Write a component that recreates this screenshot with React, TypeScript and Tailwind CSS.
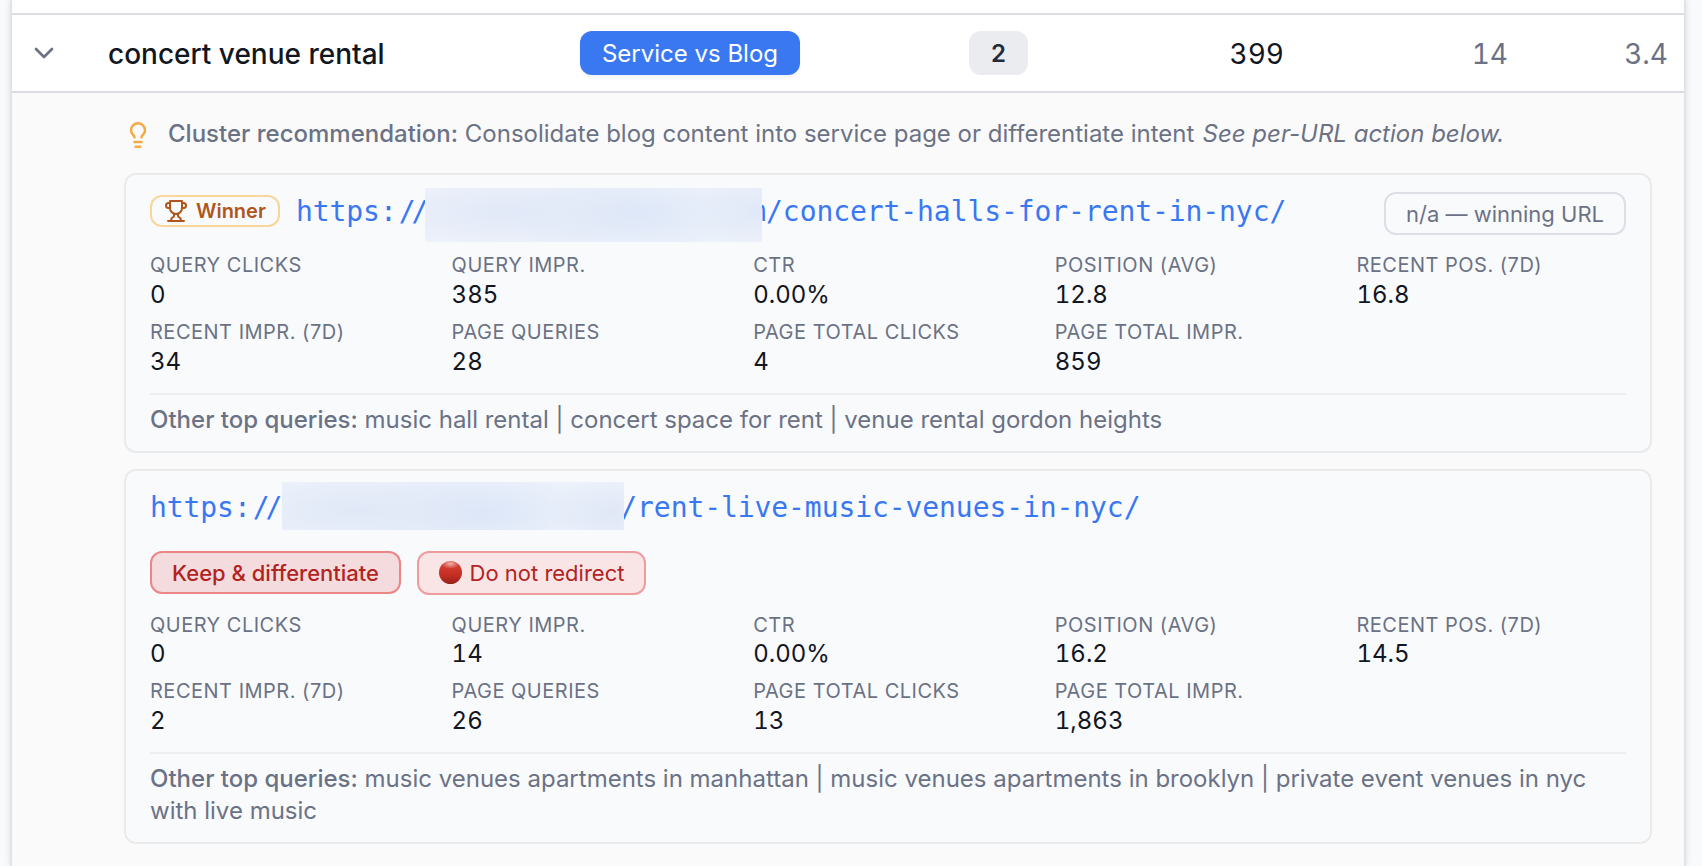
import React from "react";
import { ChevronDown } from "lucide-react";

type Metric = [string, string];

function TrophyIcon() {
  return (
    <svg className="size-6 shrink-0" viewBox="0 0 24 24" fill="none" stroke="currentColor" strokeWidth="2" strokeLinecap="round" strokeLinejoin="round">
      <path d="M6 9H4.5a2.5 2.5 0 0 1 0-5H6" />
      <path d="M18 9h1.5a2.5 2.5 0 0 0 0-5H18" />
      <path d="M4 22h16" />
      <path d="M10 14.66V17c0 .55-.47.98-.97 1.21C7.85 18.75 7 20.24 7 22" />
      <path d="M14 14.66V17c0 .55.47.98.97 1.21C16.15 18.75 17 20.24 17 22" />
      <path d="M18 2H6v7a6 6 0 0 0 12 0V2Z" />
    </svg>
  );
}

function BulbIcon() {
  return (
    <svg className="size-7 shrink-0 text-[#f5ab45]" viewBox="0 0 24 24" fill="none" stroke="currentColor" strokeWidth="2.2" strokeLinecap="round" strokeLinejoin="round">
      <path d="M15 14c.2-1 .7-1.7 1.5-2.5 1-.9 1.5-2.2 1.5-3.5A6 6 0 0 0 6 8c0 1 .2 2.2 1.5 3.5.7.7 1.3 1.5 1.5 2.5" />
      <path d="M9 18h6" />
      <path d="M10 22h4" />
    </svg>
  );
}

function Url({ tail, children }: { tail: string; children: React.ReactNode }) {
  return (
    <div className="relative pt-[2px] font-['DejaVu_Sans_Mono',monospace] text-[28px] leading-[42px] tracking-[-0.08px] whitespace-pre text-[#3a78f2]">
      <span>https:</span>
      <span className="pl-[2px] tracking-[-4px]">/</span>
      <span className="pr-[2px]">/</span>
      {children}
      <span>{tail}</span>
    </div>
  );
}

function Metrics({ items }: { items: Metric[] }) {
  return (
    <dl className="grid grid-cols-5 gap-x-8 gap-y-[6.6px]">
      {items.map(([label, value]) => (
        <div key={label}>
          <dt className="h-[29.9px] text-[20px] leading-[30px] tracking-[0.5px] text-[#6b7285]">{label}</dt>
          <dd className="h-[30px] text-[24px] leading-[30px] tabular-nums text-[#12161f]">{value}</dd>
        </div>
      ))}
    </dl>
  );
}

function OtherQueries({ text }: { text: string }) {
  return (
    <div className="mt-[16.1px] border-t-2 border-[#edeef0] pt-[9px] text-[24px] leading-8 text-[#6b7285]">
      <span className="font-medium">Other top queries:</span> {text}
    </div>
  );
}

const first: Metric[] = [
  ["QUERY CLICKS", "0"],
  ["QUERY IMPR.", "385"],
  ["CTR", "0.00%"],
  ["POSITION (AVG)", "12.8"],
  ["RECENT POS. (7D)", "16.8"],
  ["RECENT IMPR. (7D)", "34"],
  ["PAGE QUERIES", "28"],
  ["PAGE TOTAL CLICKS", "4"],
  ["PAGE TOTAL IMPR.", "859"],
];

const second: Metric[] = [
  ["QUERY CLICKS", "0"],
  ["QUERY IMPR.", "14"],
  ["CTR", "0.00%"],
  ["POSITION (AVG)", "16.2"],
  ["RECENT POS. (7D)", "14.5"],
  ["RECENT IMPR. (7D)", "2"],
  ["PAGE QUERIES", "26"],
  ["PAGE TOTAL CLICKS", "13"],
  ["PAGE TOTAL IMPR.", "1,863"],
];

export default function App() {
  return (
    <div className="h-[866px] w-[1702px] overflow-hidden bg-[#f9fafc] pl-[10px] font-['Inter',sans-serif]">
      <div className="flex h-full w-[1676px] flex-col border-x-2 border-[#e2e3e7] bg-[#fafafa] shadow-[0_0_6px_rgba(15,23,42,0.12)]">
        <div className="h-[15px] shrink-0 border-b-2 border-[#dcdde3] bg-white" />
        <div className="flex h-[78px] shrink-0 items-center border-b-2 border-[#dcdde3] bg-white text-[28px]">
          <div className="w-24 pl-4">
            <ChevronDown className="size-8 text-[#6b7285]" />
          </div>
          <div className="w-[472px] pt-[2px] font-medium text-[#12161f]">concert venue rental</div>
          <div className="flex h-11 w-[220px] items-center justify-center rounded-[12px] bg-[#3a78f2] pt-[2px] text-[24px] text-white shadow-[0_2px_3px_rgba(0,0,0,0.06)]">
            Service vs Blog
          </div>
          <div className="ml-[169px] flex h-11 w-[59px] items-center justify-center rounded-[12px] bg-[#ebecf0] pt-[2px] text-[24px] font-semibold text-[#252a3a]">2</div>
          <div className="w-[256px] pt-[2px] text-right tabular-nums text-[#12161f]">399</div>
          <div className="w-[224px] pt-[2px] text-right tabular-nums text-[#6b7285]">14</div>
          <div className="w-[160px] pt-[2px] text-right tabular-nums text-[#6b7285]">3.4</div>
        </div>

        <div className="flex h-20 shrink-0 items-center gap-4 pl-28 pt-1 text-[24px] text-[#6b7285]">
          <BulbIcon />
          <p className="whitespace-nowrap pb-[2px]">
            <span className="font-medium">Cluster recommendation:</span> Consolidate blog content into service page or differentiate intent{" "}
            <em className="ml-[1.5px]">See per-URL action below.</em>
          </p>
        </div>

        <div className="flex flex-col gap-4 pl-28 pr-8">
          <section className="h-[280px] rounded-[12px] border-2 border-[#e9eaec] bg-[#f9fafc] px-6">
            <div className="flex h-[75.45px] items-start pt-[14px]">
              <span className="mr-4 mt-[6px] flex h-8 w-[130px] items-center gap-2 rounded-[12px] border-2 border-[#f7d69a] pl-3 text-[20px] font-semibold text-[#b0561c]">
                <TrophyIcon />
                Winner
              </span>
              <Url tail="/concert-halls-for-rent-in-nyc/">
                <span className="inline-block w-[319px]"></span>
                <span>m</span>
                <span className="absolute -top-[1px] left-[129px] h-[54px] w-[337px] bg-[#eff3fb] bg-[radial-gradient(ellipse_170px_42px_at_26%_45%,#e1e8f7,transparent),radial-gradient(ellipse_130px_44px_at_62%_48%,#dce7f8,transparent),radial-gradient(ellipse_60px_44px_at_98%_42%,#e1e8f7,transparent)]" />
              </Url>
              <span className="ml-auto mt-[3px] flex h-[43px] w-[242px] items-center justify-center rounded-[12px] border-2 border-[#dcdfe6] pt-px text-[22px] text-[#6b7285]">
                n/a — winning URL
              </span>
            </div>
            <Metrics items={first} />
            <OtherQueries text="music hall rental | concert space for rent | venue rental gordon heights" />
          </section>

          <section className="h-[375px] rounded-[12px] border-2 border-[#e9eaec] bg-[#f9fafc] px-6">
            <div className="h-20 pt-[14px]">
              <Url tail="/rent-live-music-venues-in-nyc/">
                <span className="inline-block w-[336px]"></span>
                <span className="absolute -top-[3px] left-[132px] h-12 w-[342px] bg-[#eff3fb] bg-[radial-gradient(ellipse_170px_44px_at_22%_60%,#e0e8f7,transparent),radial-gradient(ellipse_130px_46px_at_58%_64%,#dbe6f8,transparent),radial-gradient(ellipse_60px_44px_at_96%_65%,#e0e7f6,transparent)]" />
              </Url>
            </div>
            <div className="flex h-[58.55px] gap-4 text-[22px] text-[#b3231f]">
              <span className="flex h-[43px] w-[251px] items-center justify-center rounded-[12px] border-2 border-[#ec8585] bg-[#f4dcde] pt-px font-medium">Keep &amp; differentiate</span>
              <span className="flex h-11 w-[229px] items-center justify-center gap-2 rounded-[12px] border-2 border-[#ef9c9f] bg-[#f9e4e6]">
                <span className="mb-[2px] size-[23px] rounded-full bg-[radial-gradient(ellipse_9px_5px_at_50%_12%,#f3b0aa,transparent),linear-gradient(#c8453c_0%,#d03a2e_30%,#c52e22_60%,#93221b_100%)]" />
                Do not redirect
              </span>
            </div>
            <Metrics items={second} />
            <OtherQueries text="music venues apartments in manhattan | music venues apartments in brooklyn | private event venues in nyc with live music" />
          </section>
        </div>
      </div>
    </div>
  );
}
